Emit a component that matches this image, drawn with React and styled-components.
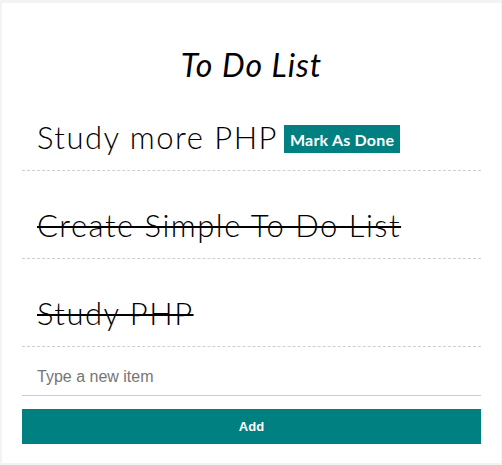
import React, { useState } from 'react';
import styled, { createGlobalStyle } from 'styled-components';

const GlobalStyle = createGlobalStyle`
    * { box-sizing: border-box; }
    body {
        margin: 0;
        background-color: #f3f3f3;
        font-family: "Lato", "Open Sans", sans-serif;
    }
`;

const Page = styled.div`
    padding: 3px 1px 2px 2px;
`;

const Card = styled.div`
    background-color: #fff;
    padding: 44px 20px 19px 20px;
`;

const Title = styled.h1`
    margin: 0;
    text-align: center;
    font-size: 32px;
    line-height: 36px;
    font-style: italic;
    font-weight: 400;
    letter-spacing: 1px;
    color: #000;
`;

const List = styled.ul`
    list-style: none;
    margin: 0;
    padding: 0;
`;

const Item = styled.li`
    display: flex;
    align-items: center;
    padding: 36px 15px 15px 15px;
    border-bottom: 1px dashed #cfcfcf;
    font-size: 31px;
    line-height: 36px;
    font-weight: 300;
    letter-spacing: 1.5px;
    color: #000;
    text-decoration: ${props => (props.done ? 'line-through' : 'none')};
    text-decoration-thickness: 2px;
`;

const DoneButton = styled.button`
    margin-left: 6px;
    margin-top: 4px;
    height: 28px;
    padding: 0 6px;
    border: none;
    background-color: #008080;
    color: #fff;
    font-family: "Lato", sans-serif;
    font-size: 16px;
    font-weight: 700;
    letter-spacing: 0.2px;
    cursor: pointer;
`;

const Input = styled.input`
    display: block;
    width: 100%;
    height: 48px;
    margin-top: 1px;
    padding: 10px 15px 0 15px;
    border: none;
    border-bottom: 1px solid #cccccc;
    font-family: "Liberation Sans", Arial, sans-serif;
    font-size: 16px;
    outline: none;
    &::placeholder { color: #757575; }
`;

const AddButton = styled.button`
    display: block;
    width: 100%;
    height: 35px;
    margin-top: 13px;
    border: none;
    background-color: #008080;
    color: #fff;
    font-family: "Liberation Sans", Arial, sans-serif;
    font-size: 13px;
    font-weight: 700;
    cursor: pointer;
`;

const App = () => {
    const [items] = useState([
        { text: 'Study more PHP', done: false },
        { text: 'Create Simple To Do List', done: true },
        { text: 'Study PHP', done: true }
    ]);

    return (
        <Page>
            <GlobalStyle />
            <Card>
                <Title>To Do List</Title>
                <List>
                    {items.map(item => (
                        <Item key={item.text} done={item.done ? 1 : 0}>
                            {item.text}
                            {!item.done && <DoneButton>Mark As Done</DoneButton>}
                        </Item>
                    ))}
                </List>
                <Input type="text" placeholder="Type a new item" />
                <AddButton>Add</AddButton>
            </Card>
        </Page>
    );
};

export default App;
